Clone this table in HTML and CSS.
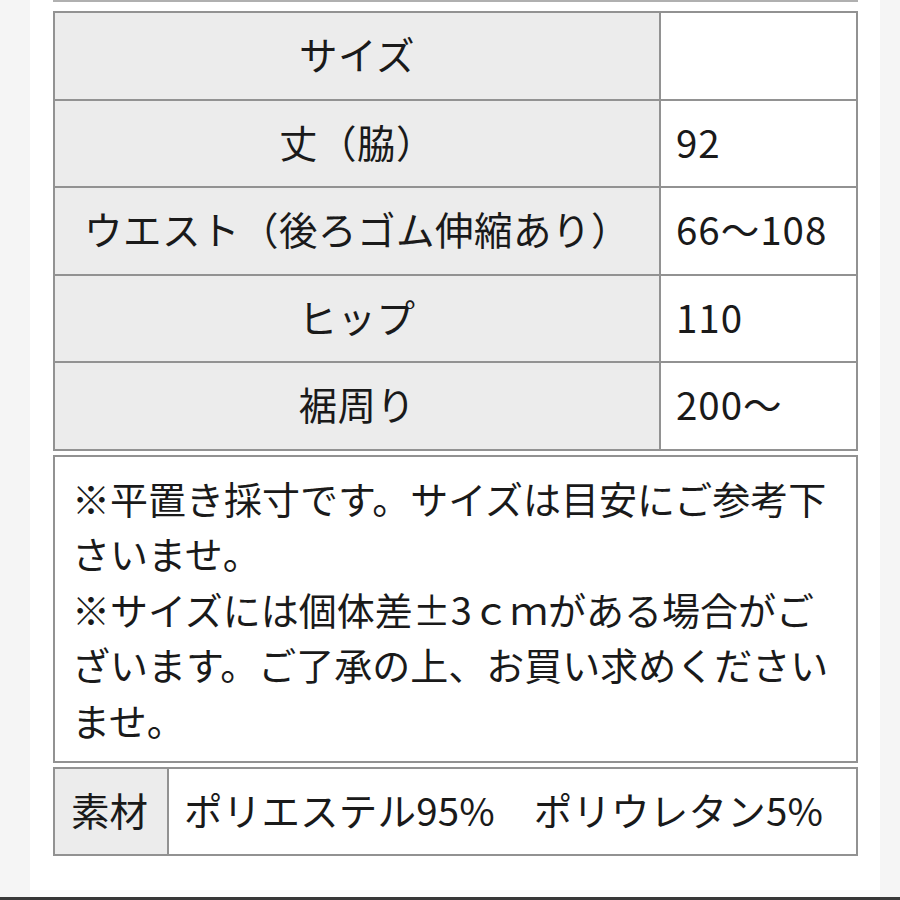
FILE: index.html
```html
<!DOCTYPE html>
<html lang="ja">
<head>
<meta charset="utf-8">
<link rel="stylesheet" href="styles.css">
</head>
<body>
<div class="page">
  <div class="prev-edge"></div>
  <div class="size-table">
    <div class="cell head">サイズ</div><div class="cell val"></div>
    <div class="cell head">丈（脇）</div><div class="cell val">92</div>
    <div class="cell head">ウエスト（後ろゴム伸縮あり）</div><div class="cell val">66～108</div>
    <div class="cell head">ヒップ</div><div class="cell val">110</div>
    <div class="cell head">裾周り</div><div class="cell val">200～</div>
  </div>
  <div class="note">
    <p>※平置き採寸です。サイズは目安にご参考下さいませ。</p>
    <p>※サイズには個体差±3ｃｍがある場合がございます。ご了承の上、お買い求めくださいませ。</p>
  </div>
  <div class="material">
    <div class="cell mhead">素材</div><div class="cell mval">ポリエステル95%　ポリウレタン5%</div>
  </div>
</div>
<div class="bottom-bar"></div>
</body>
</html>
```
FILE: styles.css
```css
html, body {
  margin: 0;
  padding: 0;
}
body {
  background: #f5f5f5;
  width: 900px;
  height: 900px;
  overflow: hidden;
  position: relative;
  font-family: "Noto Sans CJK JP", "Noto Sans", sans-serif;
  color: #1a1a1a;
}
.page {
  margin-left: 30px;
  width: 850px;
  height: 897px;
  background: #fff;
  box-sizing: border-box;
  padding-left: 23px;
  display: flex;
  flex-direction: column;
}
.prev-edge {
  width: 805px;
  height: 2px;
  background: #b0b0b0;
  margin-bottom: 9px;
}
.size-table {
  width: 805px;
  box-sizing: border-box;
  display: grid;
  grid-template-columns: 604px 195px;
  grid-auto-rows: 85.6px;
  gap: 2px;
  padding: 2px;
  background: #929292;
}
.cell {
  display: flex;
  align-items: center;
  font-size: 38.5px;
  line-height: 1;
  letter-spacing: 0.5px;
  padding-bottom: 5px;
  box-sizing: border-box;
}
.head {
  background: #ececec;
  justify-content: center;
}
.val {
  background: #fff;
  padding-left: 15px;
  letter-spacing: 1px;
}
.note {
  margin-top: 4px;
  width: 805px;
  height: 308px;
  box-sizing: border-box;
  border: 2px solid #929292;
  padding: 13px 8px 0 17px;
  font-size: 38px;
  line-height: 55.5px;
}
.note p {
  margin: 0;
}
.material {
  margin-top: 4px;
  width: 805px;
  height: 89px;
  box-sizing: border-box;
  display: grid;
  grid-template-columns: 112px 1fr;
  gap: 2px;
  padding: 2px;
  background: #929292;
}
.mhead {
  background: #ececec;
  padding-left: 16px;
  letter-spacing: 0;
}
.mval {
  background: #fff;
  padding-left: 15px;
  letter-spacing: 0.2px;
}
.bottom-bar {
  position: absolute;
  left: 0;
  bottom: 0;
  width: 900px;
  height: 3px;
  background: #3a3a3a;
}
```
